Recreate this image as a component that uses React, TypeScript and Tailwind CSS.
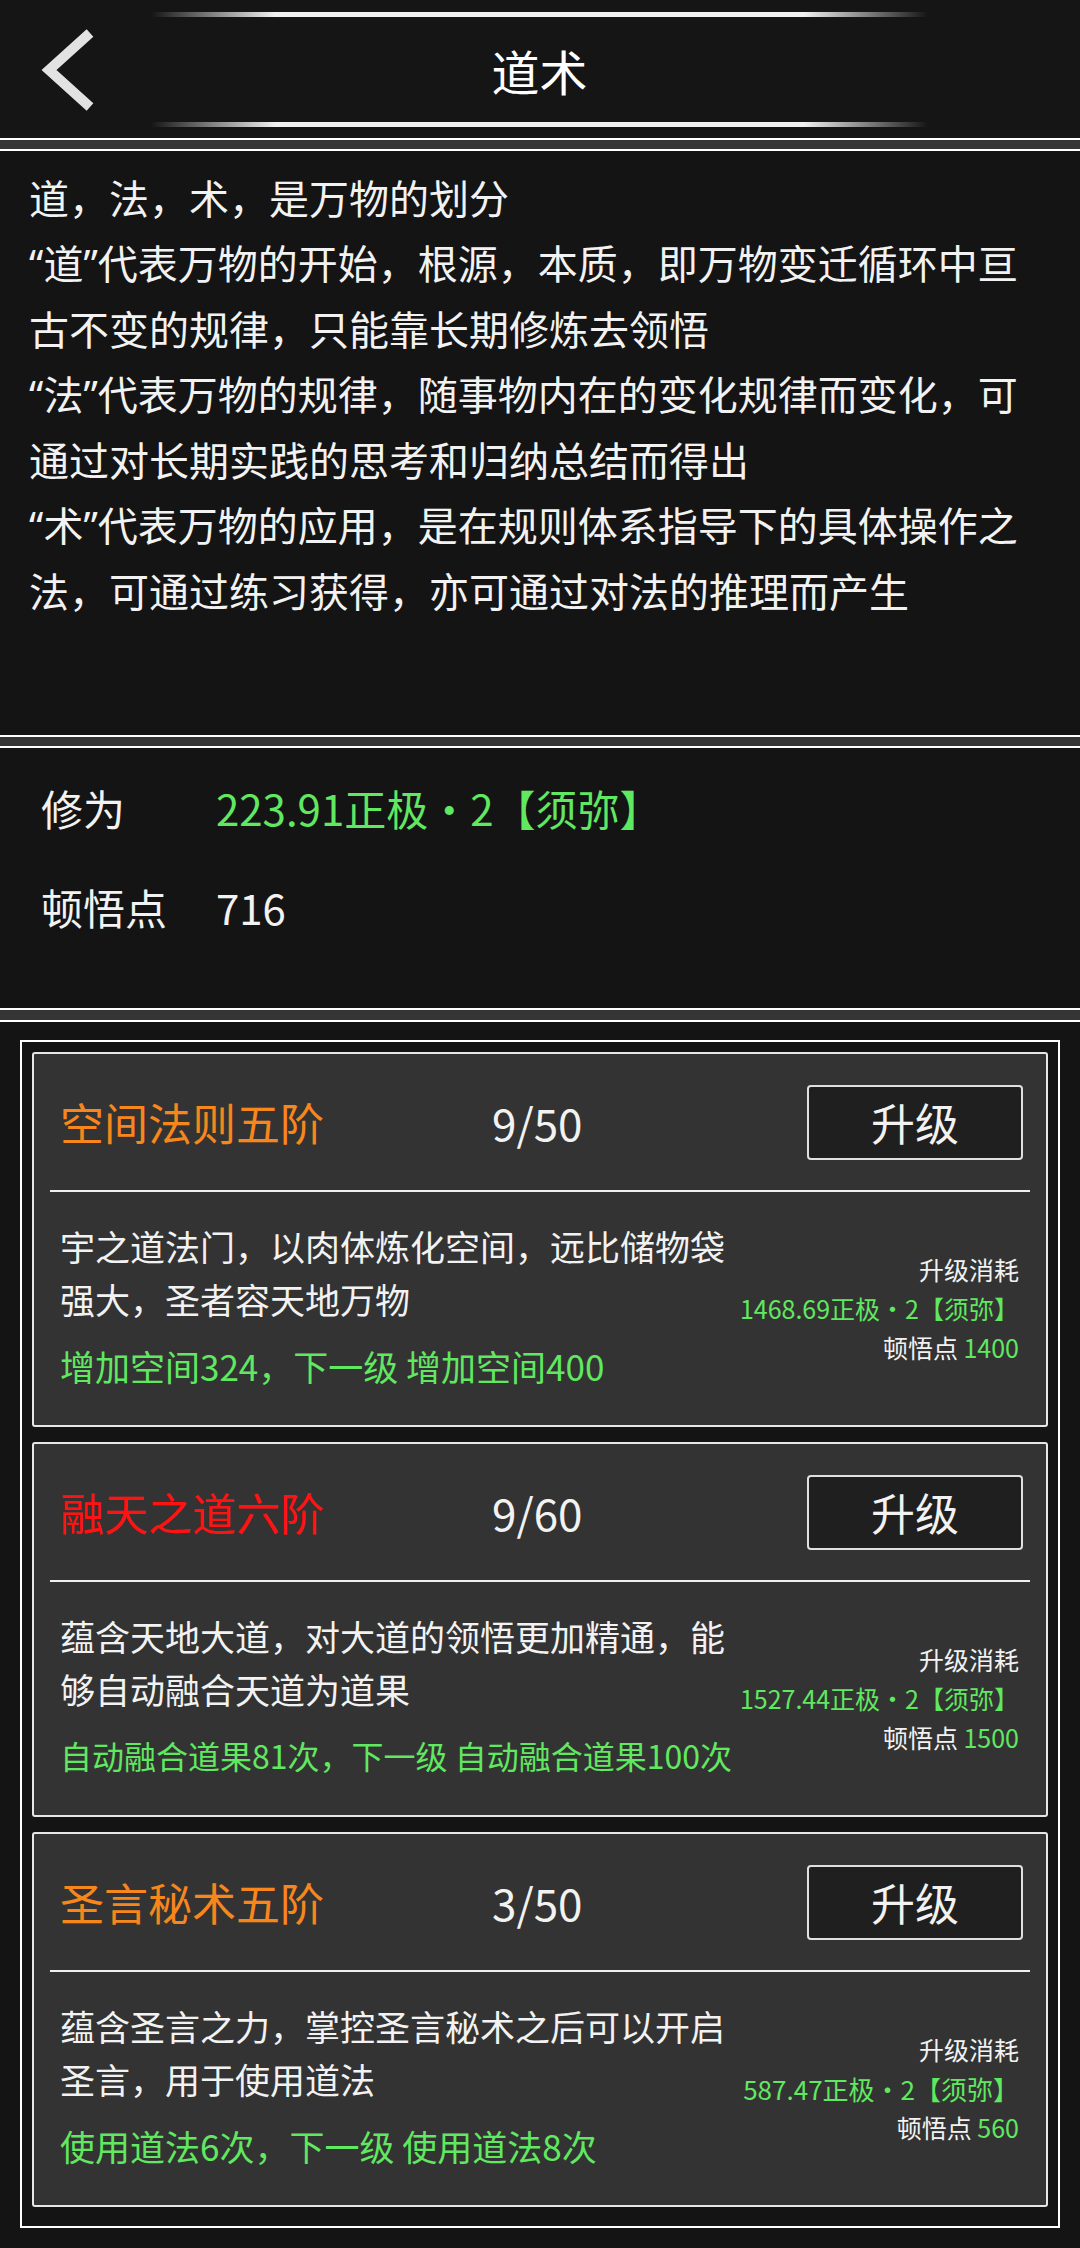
const intro = [
  "道，法，术，是万物的划分",
  "“道”代表万物的开始，根源，本质，即万物变迁循环中亘",
  "古不变的规律，只能靠长期修炼去领悟",
  "“法”代表万物的规律，随事物内在的变化规律而变化，可",
  "通过对长期实践的思考和归纳总结而得出",
  "“术”代表万物的应用，是在规则体系指导下的具体操作之",
  "法，可通过练习获得，亦可通过对法的推理而产生",
];

type Skill = {
  name: string;
  nameColor: string;
  level: string;
  desc: string[];
  effect: string;
  effectSize: string;
  cost: string;
  costSize: string;
  points: string;
};

const skills: Skill[] = [
  {
    name: "空间法则五阶",
    nameColor: "text-[#f7861c]",
    level: "9/50",
    desc: ["宇之道法门，以肉体炼化空间，远比储物袋", "强大，圣者容天地万物"],
    effect: "增加空间324，下一级 增加空间400",
    effectSize: "text-[35px]",
    cost: "1468.69正极·2【须弥】",
    costSize: "text-[25px]",
    points: "1400",
  },
  {
    name: "融天之道六阶",
    nameColor: "text-[#ff1212]",
    level: "9/60",
    desc: ["蕴含天地大道，对大道的领悟更加精通，能", "够自动融合天道为道果"],
    effect: "自动融合道果81次，下一级 自动融合道果100次",
    effectSize: "text-[32px]",
    cost: "1527.44正极·2【须弥】",
    costSize: "text-[25px]",
    points: "1500",
  },
  {
    name: "圣言秘术五阶",
    nameColor: "text-[#f7861c]",
    level: "3/50",
    desc: ["蕴含圣言之力，掌控圣言秘术之后可以开启", "圣言，用于使用道法"],
    effect: "使用道法6次，下一级 使用道法8次",
    effectSize: "text-[35px]",
    cost: "587.47正极·2【须弥】",
    costSize: "text-[26px]",
    points: "560",
  },
];

// curly quotes should be narrow, as in the latin font
function Txt({ text }: { text: string }) {
  return (
    <>
      {text.split(/([“”])/).map((part, i) =>
        part === "“" || part === "”" ? (
          <span key={i} className="font-['Noto_Sans',sans-serif]">
            {part}
          </span>
        ) : (
          part
        )
      )}
    </>
  );
}

function SkillCard({ s }: { s: Skill }) {
  return (
    <div className="h-[375px] rounded-[3px] border-2 border-[#e6e6e6] bg-[#333333] flex flex-col">
      <div className="h-[136px] flex items-center pl-[26px] pr-[23px]">
        <div className={`w-[432px] text-[44px] leading-none ${s.nameColor}`}>{s.name}</div>
        <div className="flex-1 text-[44px] leading-none text-[#f2f2f2]">{s.level}</div>
        <button className="w-[216px] h-[75px] rounded-[4px] border-2 border-[#e0e0e0] bg-[#1f1f1f] text-[44px] leading-none text-[#f2f2f2]">
          升级
        </button>
      </div>
      <div className="mx-[16px] h-[2px] bg-[#f0f0f0]" />
      <div className="flex-1 flex items-center pl-[26px] pr-[27px]">
        <div className="flex-1 pb-[6px]">
          {s.desc.map((line) => (
            <div key={line} className="text-[35px] leading-[53px] whitespace-nowrap text-[#f2f2f2]">
              {line}
            </div>
          ))}
          <div className={`mt-[14px] leading-[53px] whitespace-nowrap text-[#61e861] ${s.effectSize}`}>
            {s.effect}
          </div>
        </div>
        <div className="flex flex-col items-end text-right">
          <div className="text-[25px] leading-[39px] text-[#f2f2f2]">升级消耗</div>
          <div className={`leading-[39px] whitespace-nowrap text-[#61e861] ${s.costSize}`}>{s.cost}</div>
          <div className="text-[25px] leading-[39px] whitespace-nowrap text-[#f2f2f2]">
            顿悟点 <span className="text-[#61e861]">{s.points}</span>
          </div>
        </div>
      </div>
    </div>
  );
}

export default function App() {
  return (
    <div className="w-[1080px] min-h-[2248px] bg-[#353535] flex flex-col font-['Noto_Sans_CJK_SC','Noto_Sans',sans-serif] text-[#f2f2f2]">
      {/* header */}
      <div className="h-[140px] bg-[#151515] border-b-2 border-white flex">
        <svg width="151" height="138" viewBox="0 0 151 138" className="shrink-0">
          <polyline
            points="90,33 49,70 90,107"
            fill="none"
            stroke="#e2e2e2"
            strokeWidth="10"
            strokeLinejoin="miter"
          />
        </svg>
        <div className="w-[777px] flex flex-col pt-[12px]">
          <div className="h-[5px] rounded-full bg-[linear-gradient(90deg,transparent,#f0f0f0_16%,#f0f0f0_84%,transparent)]" />
          <div className="h-[105px] flex items-center justify-center text-[48px] leading-none text-white">道术</div>
          <div className="h-[5px] rounded-full bg-[linear-gradient(90deg,transparent,#f0f0f0_16%,#f0f0f0_84%,transparent)]" />
        </div>
      </div>

      {/* intro */}
      <div className="mt-[9px] h-[588px] bg-[#141414] border-y-2 border-white pt-[14px] pl-[29px]">
        {intro.map((line) => (
          <div key={line} className="text-[40px] leading-[65px] whitespace-nowrap">
            <Txt text={line} />
          </div>
        ))}
      </div>

      {/* stats */}
      <div className="mt-[9px] h-[264px] bg-[#141414] border-y-2 border-white pt-[29px] pl-[41px]">
        <div className="flex h-[60px] items-center text-[42px]">
          <div className="w-[175px]">修为</div>
          <div className="text-[#61e861]">223.91正极·2【须弥】</div>
        </div>
        <div className="mt-[39px] flex h-[60px] items-center text-[42px]">
          <div className="w-[175px]">顿悟点</div>
          <div>716</div>
        </div>
      </div>

      {/* skills */}
      <div className="mt-[10px] flex-1 bg-[#141414] border-t-2 border-white pt-[18px] px-[20px] pb-[20px]">
        <div className="border-2 border-white pt-[10px] px-[10px] pb-[19px] flex flex-col gap-[15px]">
          {skills.map((s) => (
            <SkillCard key={s.name} s={s} />
          ))}
        </div>
      </div>
    </div>
  );
}
